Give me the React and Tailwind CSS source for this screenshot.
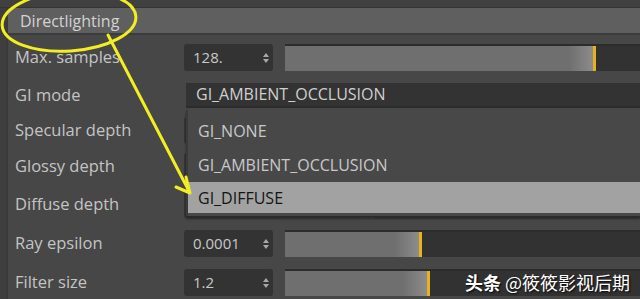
import React from 'react'

const ROWS = [
  { label: 'Max. samples', h: 'h-[39px]', kind: 'num', value: '128.', fill: 308 },
  { label: 'GI mode', h: 'h-[36px]', kind: 'select', value: 'GI_AMBIENT_OCCLUSION' },
  // these three sit under the open dropdown, their values are hidden
  { label: 'Specular depth', h: 'h-[34px]', kind: 'num', value: '', fill: 40 },
  { label: 'Glossy depth', h: 'h-[38px]', kind: 'num', value: '', fill: 60 },
  { label: 'Diffuse depth', h: 'h-[39px]', kind: 'num', value: '', fill: 86 },
  { label: 'Ray epsilon', h: 'h-[39px]', kind: 'num', value: '0.0001', fill: 134 },
  { label: 'Filter size', h: 'h-[39px]', kind: 'num', value: '1.2', fill: 142 },
]

function Spin() {
  return (
    <svg width="8" height="12" viewBox="0 0 8 12" className="mr-[3px]">
      <path d="M4 1 L7 5 L1 5 Z" fill="#a8a8a8" />
      <path d="M4 11 L7 7 L1 7 Z" fill="#a8a8a8" />
    </svg>
  )
}

function NumRow({ value, fill }) {
  return (
    <div className="flex items-center flex-1 h-[27px]">
      <div className="w-[89px] h-[27px] bg-[#333333] rounded-[3px] flex items-center justify-between pl-[9px] text-[15px] text-[#c8c8c8]">
        <span>{value}</span>
        <Spin />
      </div>
      <div className="ml-[12px] flex-1 h-[27px] bg-[#323232] border-t-2 border-[#2c2c2c] flex">
        <div className="h-full bg-[#6f6f6f] flex justify-end" style={{ width: fill }}>
          <div className="w-[24px] h-full bg-gradient-to-r from-[#6f6f6f] to-[#8c8c8c]" />
        </div>
        <div className="w-[3px] h-full bg-[#e8b21c]" />
      </div>
    </div>
  )
}

function Dropdown() {
  return (
    <div className="absolute left-[186px] top-[110px] w-[454px] h-[106px] bg-[#484848] border-l-2 border-[#3a3a3a] text-[16px] text-[#c8c8c8] shadow-[0_3px_2px_#2a2a2a]">
      <div className="h-[38px] flex items-center pl-[10px] pt-[4px]">GI_NONE</div>
      <div className="h-[34px] flex items-center pl-[10px]">GI_AMBIENT_OCCLUSION</div>
      <div className="h-[31px] flex items-center pl-[10px] bg-[#a2a2a2] text-[#141414]">GI_DIFFUSE</div>
    </div>
  )
}

export default function App() {
  return (
    <div className="relative w-[640px] h-[299px] overflow-hidden bg-[#3e3e3e] font-['Open_Sans',sans-serif]">
      <div className="h-[8px] bg-[#404040] border-b border-[#353535]" />
      <div className="ml-[6px] h-full border-l-2 border-[#3a3a3a] bg-[#474747]">
        {/* Header */}
        <div className="h-[27px] bg-[#5f5f5f] rounded-tl-[6px] border-b-2 border-[#3c3c3c] flex items-center pl-[12px] text-[16px] text-[#d2d2d2]">
          Directlighting
        </div>

        {/* Rows */}
        <div className="pt-[3px]">
          {ROWS.map((r) => (
            <div key={r.label} className={`${r.h} flex items-center`}>
              <div className="w-[176px] pl-[7px] text-[16.5px] text-[#c4c4c4]">{r.label}</div>
              {r.kind === 'num' ? (
                <NumRow value={r.value} fill={r.fill} />
              ) : (
                <div className="ml-[2px] flex-1 h-[25px] bg-[#333333] border-b-2 border-[#2c2c2c] flex items-center pl-[10px] text-[16px] text-[#cfcfcf]">
                  {r.value}
                </div>
              )}
            </div>
          ))}
        </div>
      </div>

      <Dropdown />

      {/* Annotation */}
      <svg className="absolute inset-0 pointer-events-none" width="640" height="299" viewBox="0 0 640 299">
        <ellipse cx="69" cy="21" rx="67" ry="30" transform="rotate(-4 69 21)" fill="none" stroke="#f2ee22" strokeWidth="3" />
        <path d="M108 35 L190 193 M190 193 L186 177 M190 193 L176 187" fill="none" stroke="#f2ee22" strokeWidth="3" strokeLinecap="round" />
      </svg>

      {/* Watermark */}
      <div className="absolute right-[10px] bottom-[3px] text-[18px] text-white font-['Noto_Sans_CJK_SC',sans-serif] [text-shadow:1px_1px_2px_#000]">
        <span className="font-bold">头条</span> @筱筱影视后期
      </div>
    </div>
  )
}
